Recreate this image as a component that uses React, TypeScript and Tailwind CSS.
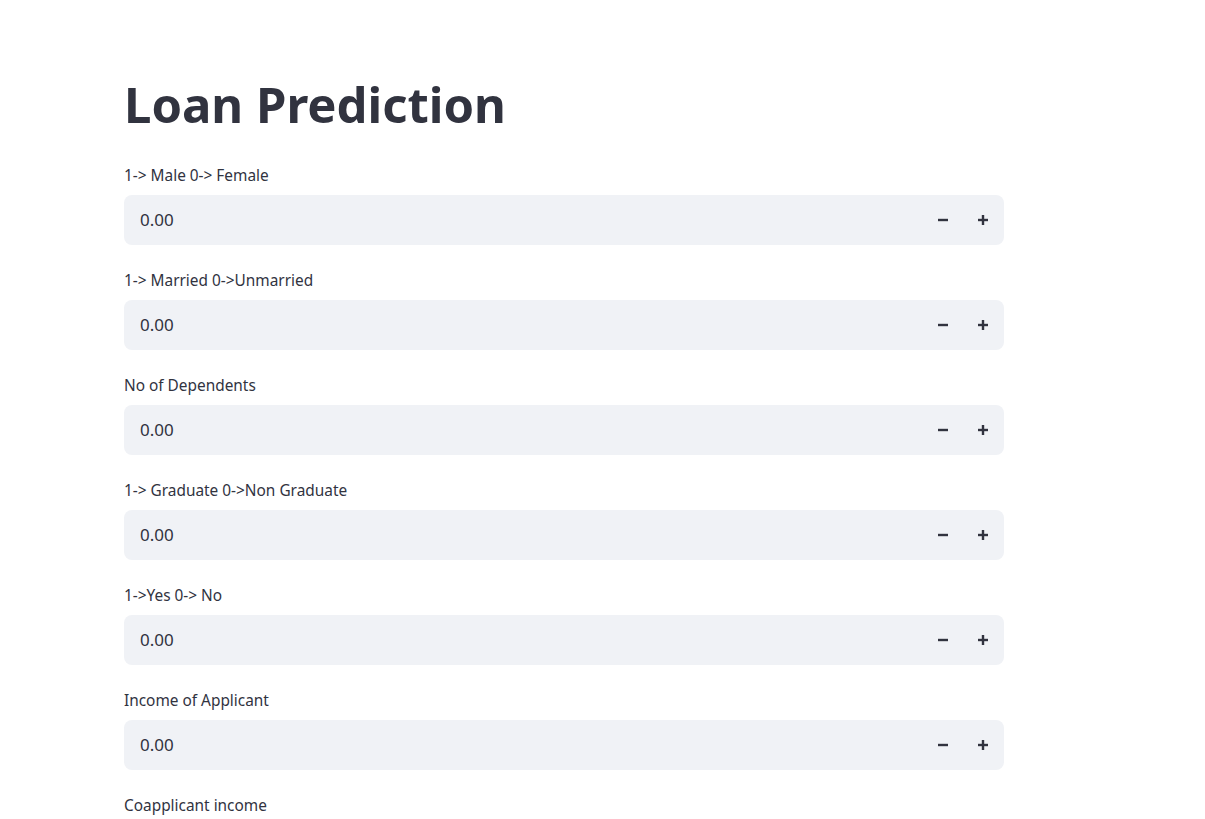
import { useState } from "react";

const FIELDS = [
  "1-> Male 0-> Female",
  "1-> Married 0->Unmarried",
  "No of Dependents",
  "1-> Graduate 0->Non Graduate",
  "1->Yes 0-> No",
  "Income of Applicant",
  "Coapplicant income",
];

function NumberInput({ label }: { label: string }) {
  const [value, setValue] = useState(0);

  return (
    <div className="mb-[24px]">
      <label className="mb-[9px] block h-[22px] pt-[1px] text-[15.4px] leading-[21px] text-[#31333f]">{label}</label>
      <div className="flex h-[50px] items-center rounded-lg bg-[#f0f2f6] pr-[1px]">
        <input
          className="h-full flex-1 bg-transparent pb-[2px] pl-4 text-[17px] text-[#31333f] outline-none"
          value={value.toFixed(2)}
          readOnly
        />
        <button
          type="button"
          className="flex h-full w-[40px] items-center justify-center text-[#31333f]"
          onClick={() => setValue(value - 0.01)}
          aria-label="Decrement"
        >
          <svg className="h-[12px] w-[12px]" viewBox="0 0 12 12" aria-hidden="true">
            <rect x="1" y="4.8" width="10" height="2.4" fill="currentColor" />
          </svg>
        </button>
        <button
          type="button"
          className="flex h-full w-[40px] items-center justify-center text-[#31333f]"
          onClick={() => setValue(value + 0.01)}
          aria-label="Increment"
        >
          <svg className="h-[12px] w-[12px]" viewBox="0 0 12 12" aria-hidden="true">
            <rect x="1" y="4.8" width="10" height="2.4" fill="currentColor" />
            <rect x="4.8" y="1" width="2.4" height="10" fill="currentColor" />
          </svg>
        </button>
      </div>
    </div>
  );
}

export default function App() {
  return (
    <div className="min-h-screen bg-white" style={{ fontFamily: "'Noto Sans', 'Open Sans', sans-serif" }}>
      <main className="ml-[124px] w-[880px] pt-[77px]">
        <h1 className="mb-[32px] h-[55px] text-[49px] font-bold leading-[55px] text-[#31333f]">
          Loan Prediction
        </h1>
        {FIELDS.map((label) => (
          <NumberInput key={label} label={label} />
        ))}
      </main>
    </div>
  );
}
